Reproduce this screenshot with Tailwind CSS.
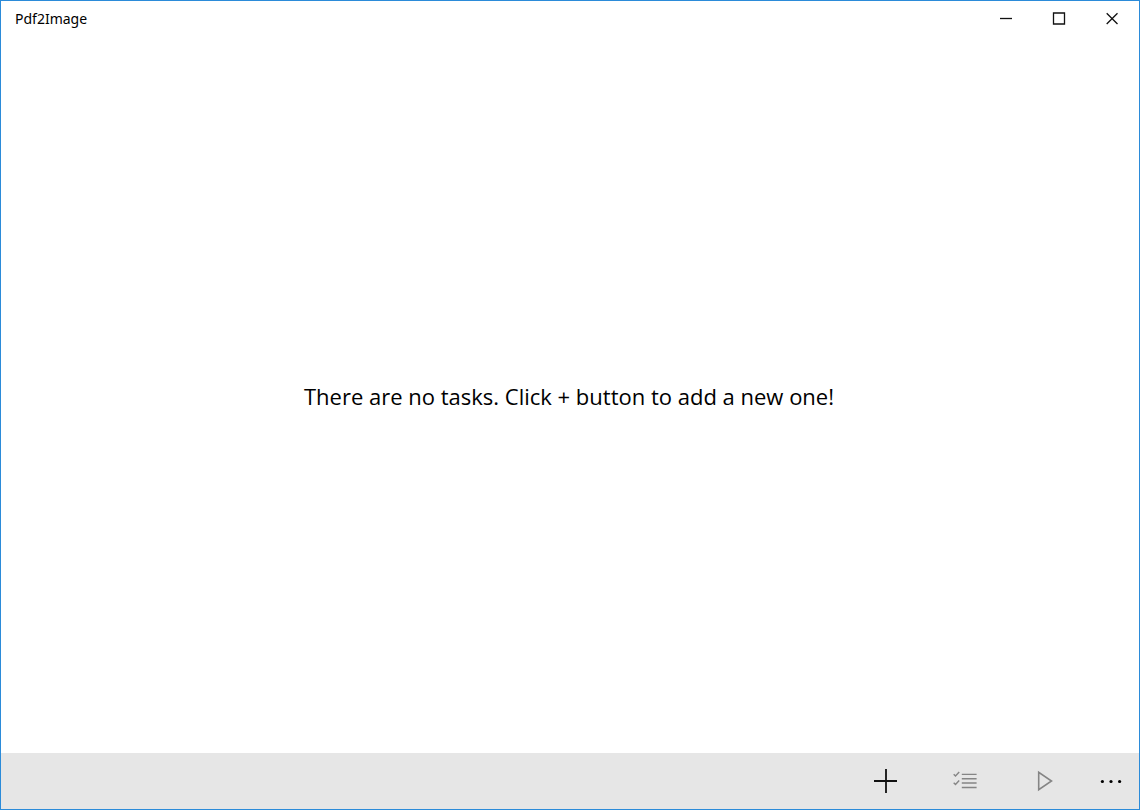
<!DOCTYPE html>
<html lang="en">
<head>
<meta charset="utf-8">
<title>Pdf2Image</title>
<script src="https://cdn.jsdelivr.net/npm/@tailwindcss/browser@4"></script>
</head>
<body class="flex min-h-screen flex-col border border-[#2b8bd9] bg-white font-['Open_Sans','Noto_Sans',sans-serif] text-black">
  <header class="flex h-9 justify-between">
    <h1 class="pl-3.5 font-['Noto_Sans',sans-serif] text-sm leading-9">Pdf2Image</h1>
    <div class="flex h-[34px] pr-px">
      <button type="button" aria-label="Minimize" class="grid w-[53px] place-items-center">
        <svg class="size-3.5" viewBox="0 0 14 14" fill="none" stroke="#111" stroke-width="1.3"><path d="M1 7.5H13"/></svg>
      </button>
      <button type="button" aria-label="Maximize" class="grid w-[53px] place-items-center">
        <svg class="size-3.5" viewBox="0 0 14 14" fill="none" stroke="#111" stroke-width="1.3"><path d="M1.5 2H12.5V13H1.5Z"/></svg>
      </button>
      <button type="button" aria-label="Close" class="grid w-[53px] place-items-center">
        <svg class="size-3.5" viewBox="0 0 14 14" fill="none" stroke="#111" stroke-width="1.3"><path d="M1.7 2.2L12.5 13M12.5 2.2L1.7 13"/></svg>
      </button>
    </div>
  </header>
  <main class="flex grow items-center justify-center pt-0.5 pr-0.5">
    <p class="text-[22px] leading-8">There are no tasks. Click + button to add a new one!</p>
  </main>
  <footer class="flex h-14 justify-end bg-[#e6e6e6]">
    <button type="button" aria-label="Add task" class="grid w-20 place-items-center">
      <svg class="size-6" viewBox="0 0 24 24" fill="none" stroke="#111" stroke-width="1.8"><path d="M13 0V24M1 12H25"/></svg>
    </button>
    <button type="button" aria-label="Select tasks" disabled class="grid w-20 place-items-center">
      <svg class="size-6" viewBox="0 0 24 24" fill="none" stroke="#858585" stroke-width="1.4"><path d="M8.8 5.4H23.6M8.8 9.7H23.6M8.8 14H23.6M8.8 18.5H23.6M.7 5.2L2.5 7L6.2 3M.7 13.8L2.5 15.6L6.2 11.6"/></svg>
    </button>
    <button type="button" aria-label="Start" disabled class="grid w-20 place-items-center">
      <svg class="size-6" viewBox="0 0 24 24" fill="none" stroke="#858585" stroke-width="1.6"><path d="M5.7 3.3V20.7L18.5 12Z"/></svg>
    </button>
    <button type="button" aria-label="More options" class="grid w-[54px] place-items-center">
      <svg class="size-6" viewBox="0 0 24 24" fill="#000"><circle cx="2.4" cy="12.5" r="1.6"/><circle cx="11" cy="12.5" r="1.6"/><circle cx="19.6" cy="12.5" r="1.6"/></svg>
    </button>
  </footer>
</body>
</html>
